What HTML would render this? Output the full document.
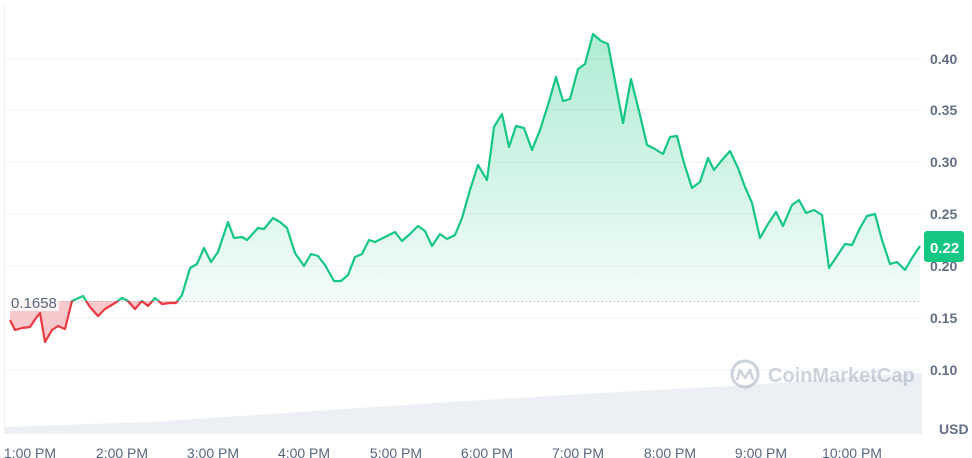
<!DOCTYPE html>
<html><head><meta charset="utf-8"><style>
html,body{margin:0;padding:0;background:#fff;width:972px;height:458px;overflow:hidden;font-family:"Liberation Sans",sans-serif}
</style></head><body>
<svg width="972" height="458" viewBox="0 0 972 458" xmlns="http://www.w3.org/2000/svg">
<defs>
<linearGradient id="gg" x1="0" y1="30" x2="0" y2="301" gradientUnits="userSpaceOnUse">
<stop offset="0" stop-color="#16c784" stop-opacity="0.35"/>
<stop offset="1" stop-color="#16c784" stop-opacity="0.05"/>
</linearGradient>
<clipPath id="above"><rect x="0" y="0" width="930" height="301"/></clipPath>
<clipPath id="below"><rect x="0" y="301" width="930" height="200"/></clipPath>
</defs>
<g stroke="#eff1f4" stroke-width="1">
<line x1="4" y1="59" x2="922" y2="59"/><line x1="4" y1="110" x2="922" y2="110"/>
<line x1="4" y1="162" x2="922" y2="162"/><line x1="4" y1="214" x2="922" y2="214"/>
<line x1="4" y1="266" x2="922" y2="266"/><line x1="4" y1="318" x2="922" y2="318"/>
<line x1="4" y1="370" x2="922" y2="370"/>
<line x1="4.5" y1="5" x2="4.5" y2="434"/>
</g>
<polygon fill="#eceff3" points="4,434 4,427 150,422 300,412 450,402 600,393 750,385 850,377 922,373 922,434"/>
<polygon clip-path="url(#above)" fill="url(#gg)" points="10,301 10,320 15,330 22,328 30,327 36,318 40,313 45,342 52,330 58,326 65,329 72,301 83,296 90,307 98,316 105,309 115,303 122,298 128,301 135,309 142,301 148,306 155,298 162,304 170,303 176,303 182,295 190,268 197,264 204,248 211,262 218,252 228,222 234,238 242,237 247,240 258,228 264,229 273,218 280,222 287,228 295,253 304,266 311,254 318,256 325,265 334,281 341,281 348,275 355,257 362,254 369,240 375,242 385,237 395,232 402,241 410,234 418,226 425,231 432,246 440,234 447,239 455,235 462,218 470,190 478,165 487,180 494,127 502,114 509,147 516,126 524,128 532,150 540,130 548,105 556,77 563,101 570,99 578,69 585,64 593,34 601,41 608,44 623,123 631,79 640,115 647,145 655,149 663,154 670,137 677,136 684,163 692,188 700,182 708,158 714,170 722,160 730,151 738,168 745,187 752,203 760,238 768,224 776,212 783,226 792,205 799,200 806,213 814,210 822,215 829,268 837,256 845,244 852,245 860,228 867,216 875,214 882,240 890,264 897,262 905,270 912,258 920,246 920,301"/>
<polygon clip-path="url(#below)" fill="#f6c3c8" opacity="0.9" points="10,301 10,320 15,330 22,328 30,327 36,318 40,313 45,342 52,330 58,326 65,329 72,301 83,296 90,307 98,316 105,309 115,303 122,298 128,301 135,309 142,301 148,306 155,298 162,304 170,303 176,303 182,295 182,301"/>
<line x1="10" y1="301.5" x2="922" y2="301.5" stroke="#a1a7bb" stroke-width="1" stroke-dasharray="1,3"/>
<polyline fill="none" stroke-width="2.2" stroke-linejoin="round" points="10,320 15,330 22,328 30,327 36,318 40,313 45,342 52,330 58,326 65,329 72,301 83,296 90,307 98,316 105,309 115,303 122,298 128,301 135,309 142,301 148,306 155,298 162,304 170,303 176,303 182,295 190,268 197,264 204,248 211,262 218,252 228,222 234,238 242,237 247,240 258,228 264,229 273,218 280,222 287,228 295,253 304,266 311,254 318,256 325,265 334,281 341,281 348,275 355,257 362,254 369,240 375,242 385,237 395,232 402,241 410,234 418,226 425,231 432,246 440,234 447,239 455,235 462,218 470,190 478,165 487,180 494,127 502,114 509,147 516,126 524,128 532,150 540,130 548,105 556,77 563,101 570,99 578,69 585,64 593,34 601,41 608,44 623,123 631,79 640,115 647,145 655,149 663,154 670,137 677,136 684,163 692,188 700,182 708,158 714,170 722,160 730,151 738,168 745,187 752,203 760,238 768,224 776,212 783,226 792,205 799,200 806,213 814,210 822,215 829,268 837,256 845,244 852,245 860,228 867,216 875,214 882,240 890,264 897,262 905,270 912,258 920,246" stroke="#16c784" clip-path="url(#above)"/>
<polyline fill="none" stroke="#ea3943" stroke-width="2.2" stroke-linejoin="round" clip-path="url(#below)" points="10,320 15,330 22,328 30,327 36,318 40,313 45,342 52,330 58,326 65,329 72,301 83,296 90,307 98,316 105,309 115,303 122,298 128,301 135,309 142,301 148,306 155,298 162,304 170,303 176,303 182,295"/>
<rect x="7" y="293" width="52" height="18" fill="#fff" opacity="0.8"/>
<text x="11" y="308" font-size="15" fill="#58667e">0.1658</text>
<g font-size="14" font-weight="bold" fill="#616e85">
<text x="930" y="64">0.40</text><text x="930" y="115">0.35</text><text x="930" y="167">0.30</text>
<text x="930" y="219">0.25</text><text x="930" y="271">0.20</text><text x="930" y="323">0.15</text>
<text x="930" y="375">0.10</text><text x="939" y="434">USD</text>
</g>
<rect x="924" y="231" width="40" height="31" rx="3" fill="#16c784"/>
<text x="930" y="253" font-size="15" font-weight="bold" fill="#fff">0.22</text>
<g font-size="14" fill="#58667e" text-anchor="middle">
<text x="30" y="458">1:00 PM</text><text x="122" y="458">2:00 PM</text><text x="213" y="458">3:00 PM</text>
<text x="304" y="458">4:00 PM</text><text x="396" y="458">5:00 PM</text><text x="487" y="458">6:00 PM</text>
<text x="578" y="458">7:00 PM</text><text x="670" y="458">8:00 PM</text><text x="761" y="458">9:00 PM</text>
<text x="852" y="458">10:00 PM</text>
</g>
<g opacity="0.55">
<circle cx="745" cy="374" r="13" fill="none" stroke="#a6b0c3" stroke-width="3"/>
<path d="M737,380 L740,370 L745,378 L750,370 L753,380" fill="none" stroke="#a6b0c3" stroke-width="2.5" stroke-linejoin="round"/>
<text x="768" y="382" font-size="20" font-weight="bold" fill="#a6b0c3">CoinMarketCap</text>
</g>
</svg>
</body></html>
